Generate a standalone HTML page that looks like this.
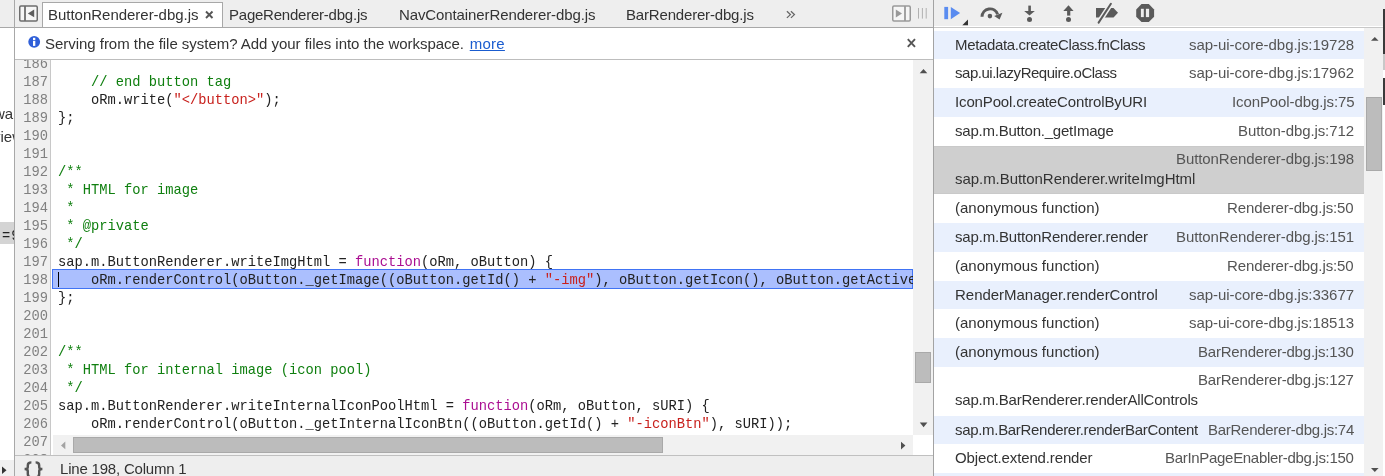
<!DOCTYPE html>
<html><head><meta charset="utf-8">
<style>
*{margin:0;padding:0;box-sizing:border-box}
html,body{width:1385px;height:476px;overflow:hidden;background:#fff;position:relative;font-family:"Liberation Sans",sans-serif;font-size:15px;color:#333}
.a{position:absolute}
.t{position:absolute;white-space:pre;line-height:18px;height:18px}
.code{position:absolute;left:58px;font-family:"Liberation Mono",monospace;font-size:13.75px;line-height:18px;height:18px;white-space:pre;color:#222}
.ln{position:absolute;left:15px;width:33px;text-align:right;font-family:"Liberation Mono",monospace;font-size:13.75px;line-height:18px;height:18px;color:#808080}
.c{color:#0f7f0f}
.s{color:#c8201c}
.k{color:#aa0d91}
.row{position:absolute;left:934px;width:430px}
.fn{position:absolute;left:21px;white-space:pre;line-height:18px;color:#333}
.fl{position:absolute;right:10px;white-space:pre;line-height:18px;color:#555}
svg{position:absolute;left:0;top:0;overflow:visible}
.t,.code,.ln,.fn,.fl{will-change:transform}
</style></head><body>
<div class="a" style="left:0;top:0;width:14px;height:27px;background:#eeeeee"></div>
<div class="a" style="left:0;top:27px;width:14px;height:1px;background:#a8a8a8"></div>
<div class="a" style="left:0;top:0;width:14px;height:476px;overflow:hidden">
<div class="t" style="left:-5.6px;top:105px;color:#333">wa</div>
<div class="t" style="left:-6.8px;top:128px;color:#333">view</div>
</div>
<div class="a" style="left:0;top:222px;width:14px;height:22px;background:#d4d4d4"></div>
<div class="t" style="left:2px;top:227.5px;color:#222;font-family:'Liberation Mono',monospace;font-size:13.75px;letter-spacing:1px">=9</div>
<div class="a" style="left:0;top:460px;width:14px;height:16px;background:#f0f0f0"></div>
<svg width="20" height="476"><polygon points="2,466.5 6.5,470.2 2,474" fill="#333"/></svg>
<div class="a" style="left:14px;top:0;width:1px;height:476px;background:#a8a8a8"></div>
<div class="a" style="left:15px;top:0;width:918px;height:27px;background:#eeeeee"></div>
<div class="a" style="left:15px;top:27px;width:918px;height:1px;background:#a8a8a8"></div>
<div class="a" style="left:42px;top:2px;width:181px;height:25px;background:#fff;border:1px solid #a8a8a8;border-bottom:none"></div>
<div class="t" style="left:48px;top:6px;letter-spacing:-0.02px">ButtonRenderer-dbg.js</div>
<div class="t" style="left:229px;top:6px;letter-spacing:-0.227px">PageRenderer-dbg.js</div>
<div class="t" style="left:399px;top:6px;letter-spacing:-0.107px">NavContainerRenderer-dbg.js</div>
<div class="t" style="left:626px;top:6px;letter-spacing:-0.176px">BarRenderer-dbg.js</div>
<svg width="1385" height="476">
 <rect x="19.75" y="6" width="17.5" height="15" rx="1.2" fill="#f6f6f6" stroke="#6e6e6e" stroke-width="1.5"/>
 <line x1="25" y1="6" x2="25" y2="21" stroke="#6e6e6e" stroke-width="1.8"/>
 <polygon points="27.8,13.4 34.2,9.5 34.2,17.3" fill="#5e5e5e"/>
 <path d="M206,11.5 L212.5,18 M212.5,11.5 L206,18" stroke="#555" stroke-width="1.9" fill="none"/>
 <path d="M786.9,11.3 L790.4,14.6 L786.9,17.9 M790.9,11.3 L794.4,14.6 L790.9,17.9" stroke="#666" stroke-width="1.3" fill="none"/>
 <rect x="892.75" y="6" width="17.5" height="15" rx="1.2" fill="#f6f6f6" stroke="#9a9a9a" stroke-width="1.5"/>
 <line x1="905" y1="6" x2="905" y2="21" stroke="#9a9a9a" stroke-width="1.8"/>
 <polygon points="895.8,9.6 902,13.5 895.8,17.4" fill="#999"/>
 <path d="M918.5,8 V18.6 M922.4,8 V18.6 M926.2,8 V18.6" stroke="#b0b0b0" stroke-width="1"/>
</svg>
<div class="a" style="left:15px;top:59px;width:918px;height:1px;background:#bdbdbd"></div>
<svg width="1385" height="476">
 <circle cx="34.2" cy="41.8" r="5.9" fill="#2f5fd8"/>
 <rect x="33" y="37.8" width="2.3" height="2.2" fill="#fff"/>
 <rect x="33" y="40.8" width="2.3" height="5.1" fill="#fff"/>
 <path d="M907.8,39.2 L915,46.8 M915,39.2 L907.8,46.8" stroke="#555" stroke-width="1.9" fill="none"/>
</svg>
<div class="t" style="left:45px;top:35px;letter-spacing:-0.032px">Serving from the file system? Add your files into the workspace. <span style="color:#1a5ccf;text-decoration:underline;letter-spacing:0.25px;margin-left:1.6px">more</span></div>
<div class="a" style="left:15px;top:60px;width:36px;height:395px;background:#f0f0f0;border-right:1px solid #c8c8c8"></div>
<div class="a" style="left:15px;top:60px;width:918px;height:395px;overflow:hidden">
<div class="a" style="left:37px;top:209px;width:861px;height:20px;background:#abbffe;border:1px solid #4073f4"></div>
<div class="a" style="left:43px;top:212px;width:1px;height:15px;background:#000"></div>
<div class="ln" style="top:-4px;left:0">186</div>
<div class="ln" style="top:14px;left:0">187</div><div class="code" style="top:14px;left:43px"><span class="c">    // end button tag</span></div>
<div class="ln" style="top:32px;left:0">188</div><div class="code" style="top:32px;left:43px">    oRm.write(<span class="s">"&lt;/button&gt;"</span>);</div>
<div class="ln" style="top:50px;left:0">189</div><div class="code" style="top:50px;left:43px">};</div>
<div class="ln" style="top:68px;left:0">190</div>
<div class="ln" style="top:86px;left:0">191</div>
<div class="ln" style="top:104px;left:0">192</div><div class="code" style="top:104px;left:43px"><span class="c">/**</span></div>
<div class="ln" style="top:122px;left:0">193</div><div class="code" style="top:122px;left:43px"><span class="c"> * HTML for image</span></div>
<div class="ln" style="top:140px;left:0">194</div><div class="code" style="top:140px;left:43px"><span class="c"> *</span></div>
<div class="ln" style="top:158px;left:0">195</div><div class="code" style="top:158px;left:43px"><span class="c"> * @private</span></div>
<div class="ln" style="top:176px;left:0">196</div><div class="code" style="top:176px;left:43px"><span class="c"> */</span></div>
<div class="ln" style="top:194px;left:0">197</div><div class="code" style="top:194px;left:43px">sap.m.ButtonRenderer.writeImgHtml = <span class="k">function</span>(oRm, oButton) {</div>
<div class="ln" style="top:212px;left:0">198</div><div class="code" style="top:212px;left:43px;width:855px;overflow:hidden">    oRm.renderControl(oButton._getImage((oButton.getId() + <span class="s">"-img"</span>), oButton.getIcon(), oButton.getActiveIcon()));</div>
<div class="ln" style="top:230px;left:0">199</div><div class="code" style="top:230px;left:43px">};</div>
<div class="ln" style="top:248px;left:0">200</div>
<div class="ln" style="top:266px;left:0">201</div>
<div class="ln" style="top:284px;left:0">202</div><div class="code" style="top:284px;left:43px"><span class="c">/**</span></div>
<div class="ln" style="top:302px;left:0">203</div><div class="code" style="top:302px;left:43px"><span class="c"> * HTML for internal image (icon pool)</span></div>
<div class="ln" style="top:320px;left:0">204</div><div class="code" style="top:320px;left:43px"><span class="c"> */</span></div>
<div class="ln" style="top:338px;left:0">205</div><div class="code" style="top:338px;left:43px">sap.m.ButtonRenderer.writeInternalIconPoolHtml = <span class="k">function</span>(oRm, oButton, sURI) {</div>
<div class="ln" style="top:356px;left:0">206</div><div class="code" style="top:356px;left:43px">    oRm.renderControl(oButton._getInternalIconBtn((oButton.getId() + <span class="s">"-iconBtn"</span>), sURI));</div>
<div class="ln" style="top:374px;left:0">207</div>
<div class="ln" style="top:392px;left:0">208</div>
</div>
<div class="a" style="left:913px;top:60px;width:20px;height:375px;background:#f1f1f1"></div>
<div class="a" style="left:915px;top:352px;width:16px;height:31px;background:#bcbcbc;border:1px solid #a9a9a9"></div>
<div class="a" style="left:53px;top:435px;width:860px;height:20px;background:#f1f1f1"></div>
<div class="a" style="left:73px;top:437px;width:590px;height:16px;background:#bcbcbc;border:1px solid #a9a9a9"></div>
<div class="a" style="left:913px;top:435px;width:20px;height:20px;background:#fff"></div>
<svg width="1385" height="476">
 <polygon points="919.7,73.2 923.5,69 927.3,73.2" fill="#505050"/>
 <polygon points="919.8,422.6 927.4,422.6 923.6,427.2" fill="#505050"/>
 <polygon points="901,441.8 905.4,445.6 901,449.4" fill="#505050"/>
 <polygon points="65.3,441.5 61,445.4 65.3,449.3" fill="#a3a3a3"/>
</svg>
<div class="a" style="left:15px;top:455px;width:918px;height:1px;background:#c0c0c0"></div>
<div class="a" style="left:15px;top:456px;width:918px;height:20px;background:#eeeeee"></div>
<svg width="1385" height="476">
 <path d="M31.4,462.4 C28.6,462.4 27.8,463.4 27.8,465.4 L27.8,467.2 C27.8,468.5 27,469 24.6,469 C27,469 27.8,469.6 27.8,471 L27.8,474 C27.8,476.2 28.6,477.4 31.4,477.4" stroke="#555" stroke-width="2.4" fill="none"/>
 <path d="M35.6,462.4 C38.4,462.4 39.2,463.4 39.2,465.4 L39.2,467.2 C39.2,468.5 40,469 42.4,469 C40,469 39.2,469.6 39.2,471 L39.2,474 C39.2,476.2 38.4,477.4 35.6,477.4" stroke="#555" stroke-width="2.4" fill="none"/>
</svg>
<div class="t" style="left:60px;top:459.7px;letter-spacing:-0.2px">Line 198, Column 1</div>
<div class="a" style="left:933px;top:0;width:1px;height:476px;background:#a3a3a3"></div>
<div class="a" style="left:934px;top:0;width:451px;height:26px;background:#eeeeee"></div>
<div class="a" style="left:934px;top:27px;width:451px;height:1px;background:#c8c8c8"></div>
<div class="row" style="top:31px;height:28px;background:#e9f0fd"><div class="fn" style="top:5.4px;letter-spacing:-0.355px">Metadata.createClass.fnClass</div><div class="fl" style="top:5.4px;letter-spacing:-0.039px">sap-ui-core-dbg.js:19728</div></div>
<div class="row" style="top:59px;height:29px;background:#ffffff"><div class="fn" style="top:5.4px;letter-spacing:-0.476px">sap.ui.lazyRequire.oClass</div><div class="fl" style="top:5.4px;letter-spacing:-0.039px">sap-ui-core-dbg.js:17962</div></div>
<div class="row" style="top:88px;height:29px;background:#e9f0fd"><div class="fn" style="top:5.4px;letter-spacing:-0.144px">IconPool.createControlByURI</div><div class="fl" style="top:5.4px;letter-spacing:-0.1px">IconPool-dbg.js:75</div></div>
<div class="row" style="top:117px;height:29px;background:#ffffff"><div class="fn" style="top:5.4px;letter-spacing:-0.219px">sap.m.Button._getImage</div><div class="fl" style="top:5.4px;letter-spacing:-0.1px">Button-dbg.js:712</div></div>
<div class="row" style="top:146px;height:48px;background:#cfcfcf"><div class="fl" style="top:4px;letter-spacing:-0.082px">ButtonRenderer-dbg.js:198</div><div class="fn" style="top:24px;letter-spacing:-0.045px">sap.m.ButtonRenderer.writeImgHtml</div></div>
<div class="row" style="top:194px;height:29px;background:#ffffff"><div class="fn" style="top:5.4px;letter-spacing:0.013px">(anonymous function)</div><div class="fl" style="top:5.4px;letter-spacing:-0.1px">Renderer-dbg.js:50</div></div>
<div class="row" style="top:223px;height:29px;background:#e9f0fd"><div class="fn" style="top:5.4px;letter-spacing:-0.178px">sap.m.ButtonRenderer.render</div><div class="fl" style="top:5.4px;letter-spacing:-0.082px">ButtonRenderer-dbg.js:151</div></div>
<div class="row" style="top:252px;height:29px;background:#ffffff"><div class="fn" style="top:5.4px;letter-spacing:0.013px">(anonymous function)</div><div class="fl" style="top:5.4px;letter-spacing:-0.1px">Renderer-dbg.js:50</div></div>
<div class="row" style="top:281px;height:28px;background:#e9f0fd"><div class="fn" style="top:5.4px;letter-spacing:-0.024px">RenderManager.renderControl</div><div class="fl" style="top:5.4px;letter-spacing:-0.039px">sap-ui-core-dbg.js:33677</div></div>
<div class="row" style="top:309px;height:29px;background:#ffffff"><div class="fn" style="top:5.4px;letter-spacing:0.013px">(anonymous function)</div><div class="fl" style="top:5.4px;letter-spacing:-0.039px">sap-ui-core-dbg.js:18513</div></div>
<div class="row" style="top:338px;height:29px;background:#e9f0fd"><div class="fn" style="top:5.4px;letter-spacing:0.013px">(anonymous function)</div><div class="fl" style="top:5.4px;letter-spacing:-0.2px">BarRenderer-dbg.js:130</div></div>
<div class="row" style="top:367px;height:49px;background:#ffffff"><div class="fl" style="top:4px;letter-spacing:-0.2px">BarRenderer-dbg.js:127</div><div class="fn" style="top:24px;letter-spacing:-0.209px">sap.m.BarRenderer.renderAllControls</div></div>
<div class="row" style="top:416px;height:28px;background:#e9f0fd"><div class="fn" style="top:5.4px;letter-spacing:-0.312px">sap.m.BarRenderer.renderBarContent</div><div class="fl" style="top:5.4px;letter-spacing:-0.275px">BarRenderer-dbg.js:74</div></div>
<div class="row" style="top:444px;height:29px;background:#ffffff"><div class="fn" style="top:5.4px;letter-spacing:-0.136px">Object.extend.render</div><div class="fl" style="top:5.4px;letter-spacing:-0.306px">BarInPageEnabler-dbg.js:150</div></div>
<div class="row" style="top:473px;height:28px;background:#e9f0fd"></div>
<div class="a" style="left:934px;top:146px;width:430px;height:1px;background:#c9c9c9"></div><div class="a" style="left:934px;top:193px;width:430px;height:1px;background:#c9c9c9"></div>
<svg width="1385" height="476">
 <rect x="944.3" y="6.9" width="3.8" height="12.3" fill="#5a8cf0"/>
 <polygon points="950.8,6.9 960.1,13 950.8,19.2" fill="#5a8cf0"/>
 <polygon points="962.3,25.2 968,25.2 968,19.4" fill="#333"/>
 <path d="M982,16.8 A8,8 0 0 1 997.6,14.4" stroke="#5a5a5a" stroke-width="3" fill="none"/>
 <polygon points="994.2,16 1002.4,12.8 999.6,19.6" fill="#5a5a5a"/>
 <circle cx="989.9" cy="16.1" r="2.3" fill="#5a5a5a"/>
 <rect x="1028.3" y="5.6" width="2.6" height="5.5" fill="#5a5a5a"/>
 <polygon points="1024.2,10.9 1034.8,10.9 1029.5,15.6" fill="#5a5a5a"/>
 <circle cx="1029.5" cy="19.4" r="2.5" fill="#5a5a5a"/>
 <polygon points="1063.3,10.9 1073.6,10.9 1068.5,5.3" fill="#5a5a5a"/>
 <rect x="1067.1" y="10.8" width="3.2" height="4.8" fill="#5a5a5a"/>
 <circle cx="1068.5" cy="19.4" r="2.5" fill="#5a5a5a"/>
 <polygon points="1096,8 1113.5,8 1118,12.8 1113.5,17.6 1096,17.6" fill="#5a5a5a"/>
 <line x1="1098.6" y1="22.6" x2="1110.9" y2="3.8" stroke="#eeeeee" stroke-width="5"/>
 <line x1="1098.6" y1="22.6" x2="1110.9" y2="3.8" stroke="#5a5a5a" stroke-width="2" stroke-linecap="round"/>
 <polygon points="1141.5,4.1 1148.8,4.1 1154.1,9.4 1154.1,16.8 1148.8,22.1 1141.5,22.1 1136.2,16.8 1136.2,9.4" fill="#5a5a5a"/>
 <rect x="1140.9" y="8.8" width="2.9" height="8.3" fill="#eeeeee"/>
 <rect x="1145.9" y="8.8" width="3.2" height="8.3" fill="#eeeeee"/>
</svg>
<div class="a" style="left:1364px;top:28px;width:19px;height:448px;background:#f1f1f1"></div>
<div class="a" style="left:1366px;top:97px;width:16px;height:74px;background:#bcbcbc;border:1px solid #a9a9a9"></div>
<svg width="1385" height="476">
 <polygon points="1371,40.8 1374.8,37 1378.6,40.8" fill="#505050"/>
 <polygon points="1371,468 1378.6,468 1374.8,472" fill="#505050"/>
</svg>
<div class="a" style="left:1383px;top:9px;width:2px;height:45px;background:#3a3a3a"></div>
<div class="a" style="left:1383px;top:54px;width:2px;height:16px;background:#c8c8c8"></div>
<div class="a" style="left:1383px;top:78px;width:2px;height:27px;background:#3a3a3a"></div>
</body></html>
